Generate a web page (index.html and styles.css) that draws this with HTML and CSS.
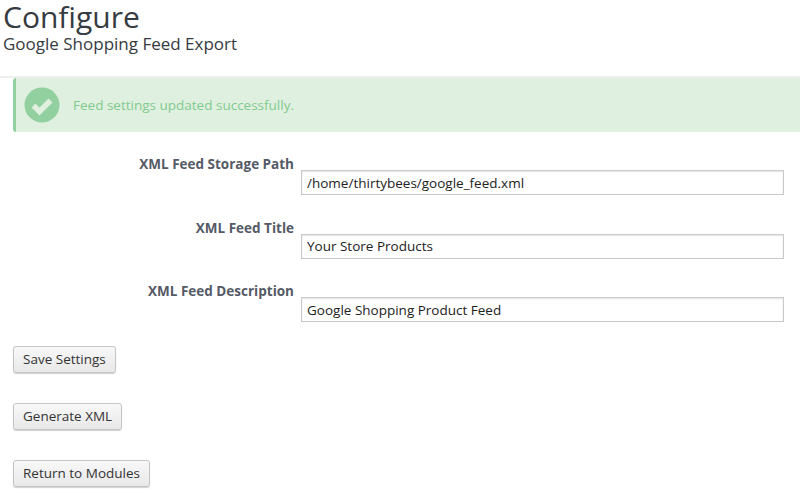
FILE: index.html
```html
<!DOCTYPE html>
<html lang="en">
<head>
<meta charset="utf-8">
<title>Configure</title>
<link rel="stylesheet" href="styles.css">
</head>
<body>
<header class="page-head">
  <h1 class="title">Configure</h1>
  <h2 class="subtitle">Google Shopping Feed Export</h2>
</header>
<div class="alert">
  <svg class="alert-icon" viewBox="0 0 36 36" width="36" height="36" aria-hidden="true">
    <circle cx="18" cy="18" r="17.5" fill="#92d09f"/>
    <path d="M9.5 18.5l6 6 11-11" fill="none" stroke="#dff0e0" stroke-width="5.5"/>
  </svg>
  <span>Feed settings updated successfully.</span>
</div>
<form class="form">
  <div class="row">
    <label class="label">XML Feed Storage Path</label>
    <input class="input" type="text" value="/home/thirtybees/google_feed.xml">
  </div>
  <div class="row">
    <label class="label">XML Feed Title</label>
    <input class="input" type="text" value="Your Store Products">
  </div>
  <div class="row">
    <label class="label">XML Feed Description</label>
    <input class="input" type="text" value="Google Shopping Product Feed">
  </div>
  <div class="actions">
    <button class="btn" type="button">Save Settings</button>
    <button class="btn" type="button">Generate XML</button>
    <button class="btn" type="button">Return to Modules</button>
  </div>
</form>
</body>
</html>
```
FILE: styles.css
```css
html, body { margin: 0; padding: 0; height: 501px; overflow: hidden; background: #fff; }
body { font-family: "Open Sans", sans-serif; color: #363a41; font-size: 13.5px; }
.page-head { height: 78px; box-sizing: border-box; padding-left: 3px; border-bottom: 2px solid #eeeeee; }
.title { margin: 0; font-size: 30px; font-weight: 400; line-height: 34px; }
.subtitle { margin: 0; font-size: 17px; font-weight: 400; line-height: 20px; }
.alert { height: 54px; box-sizing: border-box; margin-left: 13px; padding-left: 8px; border-left: 3px solid #92d09f; border-radius: 3px 0 0 3px; background: #dff0e0; color: #7fcb8d; display: flex; align-items: center; gap: 13px; }
.form { padding: 21px 16px 0 13px; }
.row { display: flex; align-items: flex-start; height: 63.5px; }
.label { width: 281px; text-align: right; font-weight: 700; color: #555a66; line-height: 22px; }
.input { margin: 17px 0 0 7px; flex: 1; height: 25px; box-sizing: border-box; border: 1px solid #c9c9c9; box-shadow: inset 0 1px 2px #e4e4e4; padding: 0 5px; font: 13.5px "Open Sans", sans-serif; color: #222; }
.actions { display: flex; flex-direction: column; align-items: flex-start; gap: 30px; margin-top: 2px; }
.btn { height: 27px; padding: 0 9px; border: 1px solid #c4c4c4; border-radius: 3px; background: linear-gradient(#f8f8f8, #e8e8e8); box-shadow: 0 1px 1px #d0d0d0; font: 13.5px "Open Sans", sans-serif; color: #333; }
```
